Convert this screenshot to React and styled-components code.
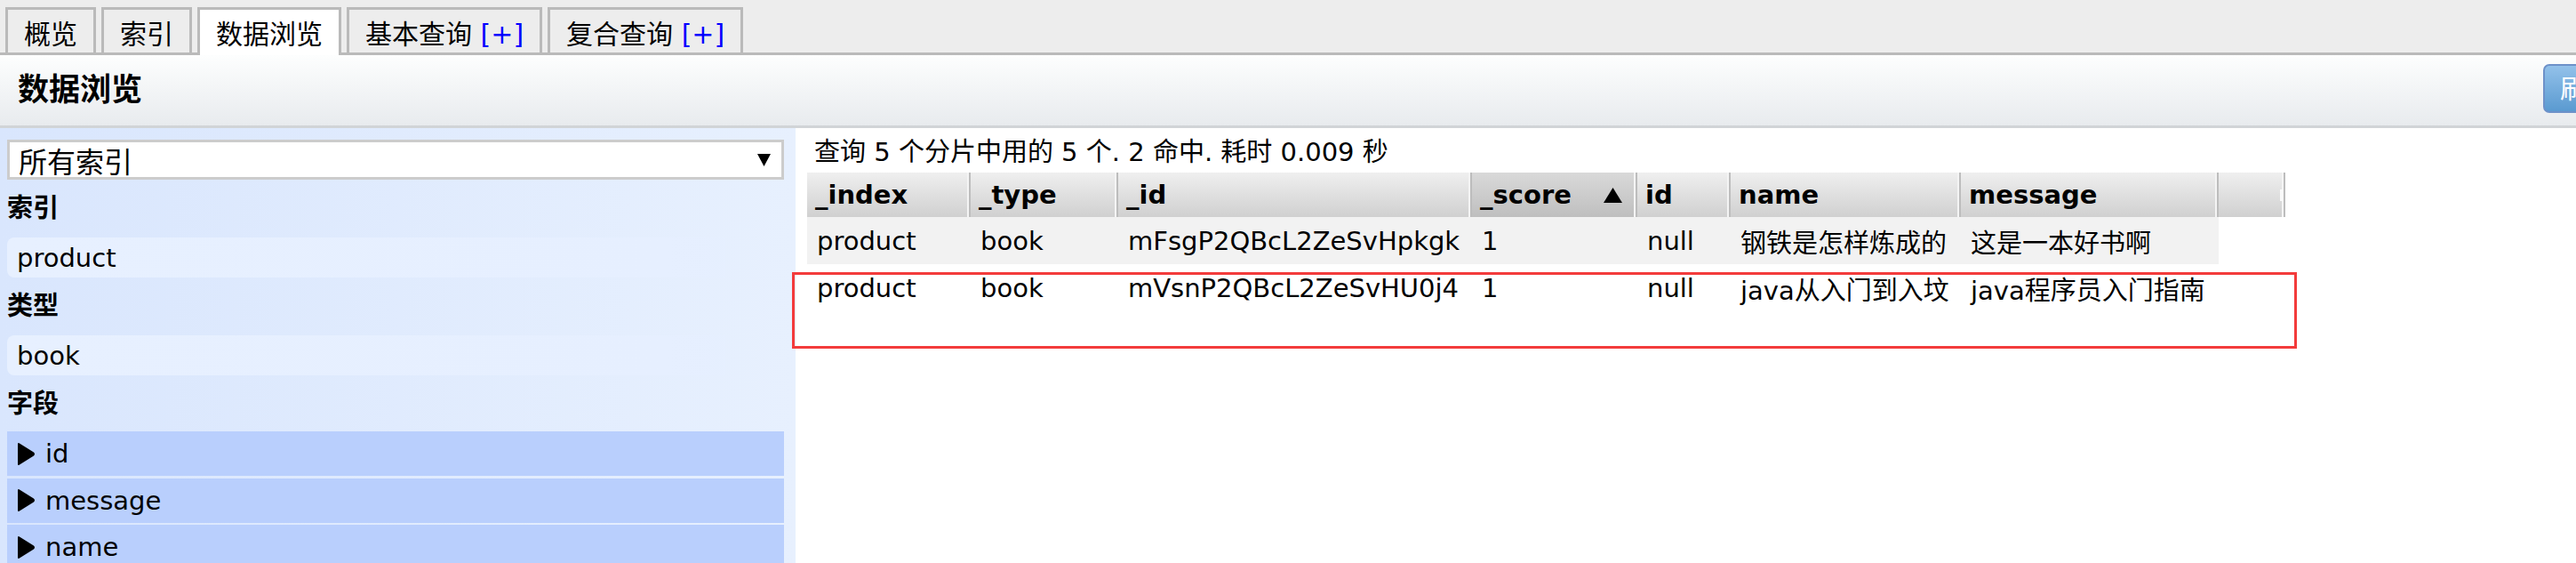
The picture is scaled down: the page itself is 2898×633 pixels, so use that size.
import React from 'react';
import styled, { createGlobalStyle } from 'styled-components';

const GlobalStyle = createGlobalStyle`
  html, body {
    margin: 0;
    padding: 0;
    background: #fff;
    overflow: hidden;
  }
  body {
    font-family: "DejaVu Sans", "Noto Sans CJK SC", sans-serif;
    font-size: 29px;
    color: #000;
  }
`;

const Page = styled.div`
  position: relative;
  width: 2898px;
  height: 633px;
  overflow: hidden;
`;

const TabBar = styled.div`
  display: flex;
  align-items: flex-end;
  gap: 6px;
  height: 62px;
  box-sizing: border-box;
  padding: 8px 0 0 6px;
  background: #ededed;
  border-bottom: 3px solid #bababa;
`;

const Tab = styled.div`
  box-sizing: border-box;
  height: ${p => (p.active ? '54px' : '51px')};
  margin-bottom: ${p => (p.active ? '-3px' : '0')};
  padding: 7px 18px 0;
  border: 3px solid #bababa;
  border-bottom: none;
  background: ${p => (p.active ? '#fff' : '#ededed')};
  font-size: 30px;
  line-height: 42px;
  white-space: nowrap;
`;

const Plus = styled.span`
  color: #0000ff;
`;

const Header = styled.div`
  display: flex;
  align-items: center;
  justify-content: space-between;
  height: 82px;
  box-sizing: border-box;
  padding-left: 20px;
  background: linear-gradient(#fdfefe, #e8ebee);
  border-bottom: 3px solid #d1d4d7;
`;

const Title = styled.h1`
  margin: 0;
  font-size: 35px;
  font-weight: bold;
  line-height: 1;
`;

const RefreshButton = styled.button`
  height: 55px;
  margin: -4px -61px 0 0;
  padding: 0 17px;
  border: 2px solid #6d91c9;
  border-radius: 7px;
  background: linear-gradient(#93c1ea, #5a9ad0);
  color: #fff;
  font-family: inherit;
  font-size: 30px;
  line-height: 1;
  white-space: nowrap;
`;

const Body = styled.div`
  display: flex;
  height: 489px;
`;

const Sidebar = styled.div`
  flex: none;
  width: 895px;
  box-sizing: border-box;
  padding: 13px 13px 0 8px;
  background: linear-gradient(to right, #d9e6fd, #e7f0fe);
`;

const Select = styled.div`
  display: flex;
  align-items: flex-start;
  height: 45px;
  box-sizing: border-box;
  border: 3px solid #cccccc;
  background: #fff;
  overflow: hidden;
`;

const SelectText = styled.span`
  padding-left: 10px;
  font-size: 32px;
  line-height: 46px;
  white-space: nowrap;
`;

const SelectArrow = styled.svg`
  flex: none;
  margin: 13px 12px 0 auto;
`;

const SectionTitle = styled.div`
  margin: 10px 0;
  font-weight: bold;
  line-height: 45px;
`;

const ValueBox = styled.div`
  display: flex;
  align-items: center;
  height: 45px;
  padding-left: 11px;
  border-radius: 8px;
  background: linear-gradient(to right, #e7f0ff 0%, #e6efff 85%, rgba(230, 239, 255, 0) 100%);
`;

const FieldList = styled.div`
  display: flex;
  flex-direction: column;
  gap: 2.5px;
  margin-top: -2px;
`;

const FieldRow = styled.div`
  display: flex;
  align-items: center;
  gap: 12px;
  height: 50px;
  flex: none;
  padding-left: 11px;
  background: #b9cffd;
`;

const Content = styled.div`
  flex: 1;
  padding: 6px 0 0 13px;
  background: #fff;
`;

const Summary = styled.div`
  height: 42px;
  margin-bottom: 2px;
  padding-left: 8px;
  line-height: 42px;
  white-space: nowrap;
`;

const Table = styled.table`
  table-layout: fixed;
  width: 1663px;
  border-collapse: separate;
  border-spacing: 0;
`;

const Th = styled.th`
  height: 50px;
  padding: 0 0 0 9px;
  text-align: left;
  font-weight: bold;
  white-space: nowrap;
  overflow: hidden;
  background: ${p =>
    p.sorted
      ? 'linear-gradient(#d9d9d9, #bfbfbf)'
      : 'linear-gradient(#efefef, #d0d0d0)'};
  box-shadow: inset -2px 0 0 #bdbdbd, inset -4px 0 0 #f4f4f4;
`;

const SortCell = styled.div`
  display: flex;
  align-items: center;
  justify-content: space-between;
  padding-right: 17px;
`;

const Handle = styled.span`
  display: inline-block;
  float: right;
  width: 3px;
  height: 13px;
  margin: 0 3px 0 0;
  background: #fafafa;
`;

const Td = styled.td`
  height: 53px;
  padding: 0 0 0 11px;
  white-space: nowrap;
  overflow: hidden;
  background: ${p => (p.striped && !p.blank ? '#f2f2f2' : '#fff')};
`;

const Highlight = styled.div`
  position: absolute;
  left: 891px;
  top: 306px;
  width: 1693px;
  height: 86px;
  box-sizing: border-box;
  border: 3px solid #f33b3b;
  pointer-events: none;
`;

const columns = [
  { key: '_index', width: 184 },
  { key: '_type', width: 166 },
  { key: '_id', width: 398 },
  { key: '_score', width: 186, sorted: true },
  { key: 'id', width: 105 },
  { key: 'name', width: 259 },
  { key: 'message', width: 290 },
  { key: '', width: 75 },
];

const rows = [
  ['product', 'book', 'mFsgP2QBcL2ZeSvHpkgk', '1', 'null', '钢铁是怎样炼成的', '这是一本好书啊'],
  ['product', 'book', 'mVsnP2QBcL2ZeSvHU0j4', '1', 'null', 'java从入门到入坟', 'java程序员入门指南'],
];

const fields = ['id', 'message', 'name'];

const Caret = () => (
  <svg width="20" height="25" viewBox="0 0 20 25">
    <path d="M2 1 L18 11 Q20 12.5 18 14 L2 24 Z" fill="#000" stroke="#000" strokeWidth="2" strokeLinejoin="round" />
  </svg>
);

export default function App() {
  return (
    <Page>
      <GlobalStyle />
      <TabBar>
        <Tab>概览</Tab>
        <Tab>索引</Tab>
        <Tab active>数据浏览</Tab>
        <Tab>基本查询 <Plus>[+]</Plus></Tab>
        <Tab>复合查询 <Plus>[+]</Plus></Tab>
      </TabBar>

      <Header>
        <Title>数据浏览</Title>
        <RefreshButton>刷新</RefreshButton>
      </Header>

      <Body>
        <Sidebar>
          <Select>
            <SelectText>所有索引</SelectText>
            <SelectArrow width="15" height="14" viewBox="0 0 15 14">
              <polygon points="0,0 15,0 7.5,14" fill="#000" />
            </SelectArrow>
          </Select>

          <SectionTitle>索引</SectionTitle>
          <ValueBox>product</ValueBox>

          <SectionTitle>类型</SectionTitle>
          <ValueBox>book</ValueBox>

          <SectionTitle>字段</SectionTitle>
          <FieldList>
            {fields.map(f => (
              <FieldRow key={f}>
                <Caret />
                <span>{f}</span>
              </FieldRow>
            ))}
          </FieldList>
        </Sidebar>

        <Content>
          <Summary>查询 5 个分片中用的 5 个. 2 命中. 耗时 0.009 秒</Summary>
          <Table>
            <colgroup>
              {columns.map((c, i) => (
                <col key={i} style={{ width: c.width }} />
              ))}
            </colgroup>
            <thead>
              <tr>
                {columns.map((c, i) => (
                  <Th key={i} sorted={c.sorted}>
                    {c.sorted ? (
                      <SortCell>
                        <span>{c.key}</span>
                        <svg width="21" height="17" viewBox="0 0 21 17">
                          <polygon points="10.5,0 21,17 0,17" fill="#000" />
                        </svg>
                      </SortCell>
                    ) : c.key ? (
                      c.key
                    ) : (
                      <Handle />
                    )}
                  </Th>
                ))}
              </tr>
            </thead>
            <tbody>
              {rows.map((r, ri) => (
                <tr key={ri}>
                  {r.map((v, ci) => (
                    <Td key={ci} striped={ri === 0}>{v}</Td>
                  ))}
                  <Td blank striped={ri === 0} />
                </tr>
              ))}
            </tbody>
          </Table>
        </Content>
      </Body>

      <Highlight />
    </Page>
  );
}
